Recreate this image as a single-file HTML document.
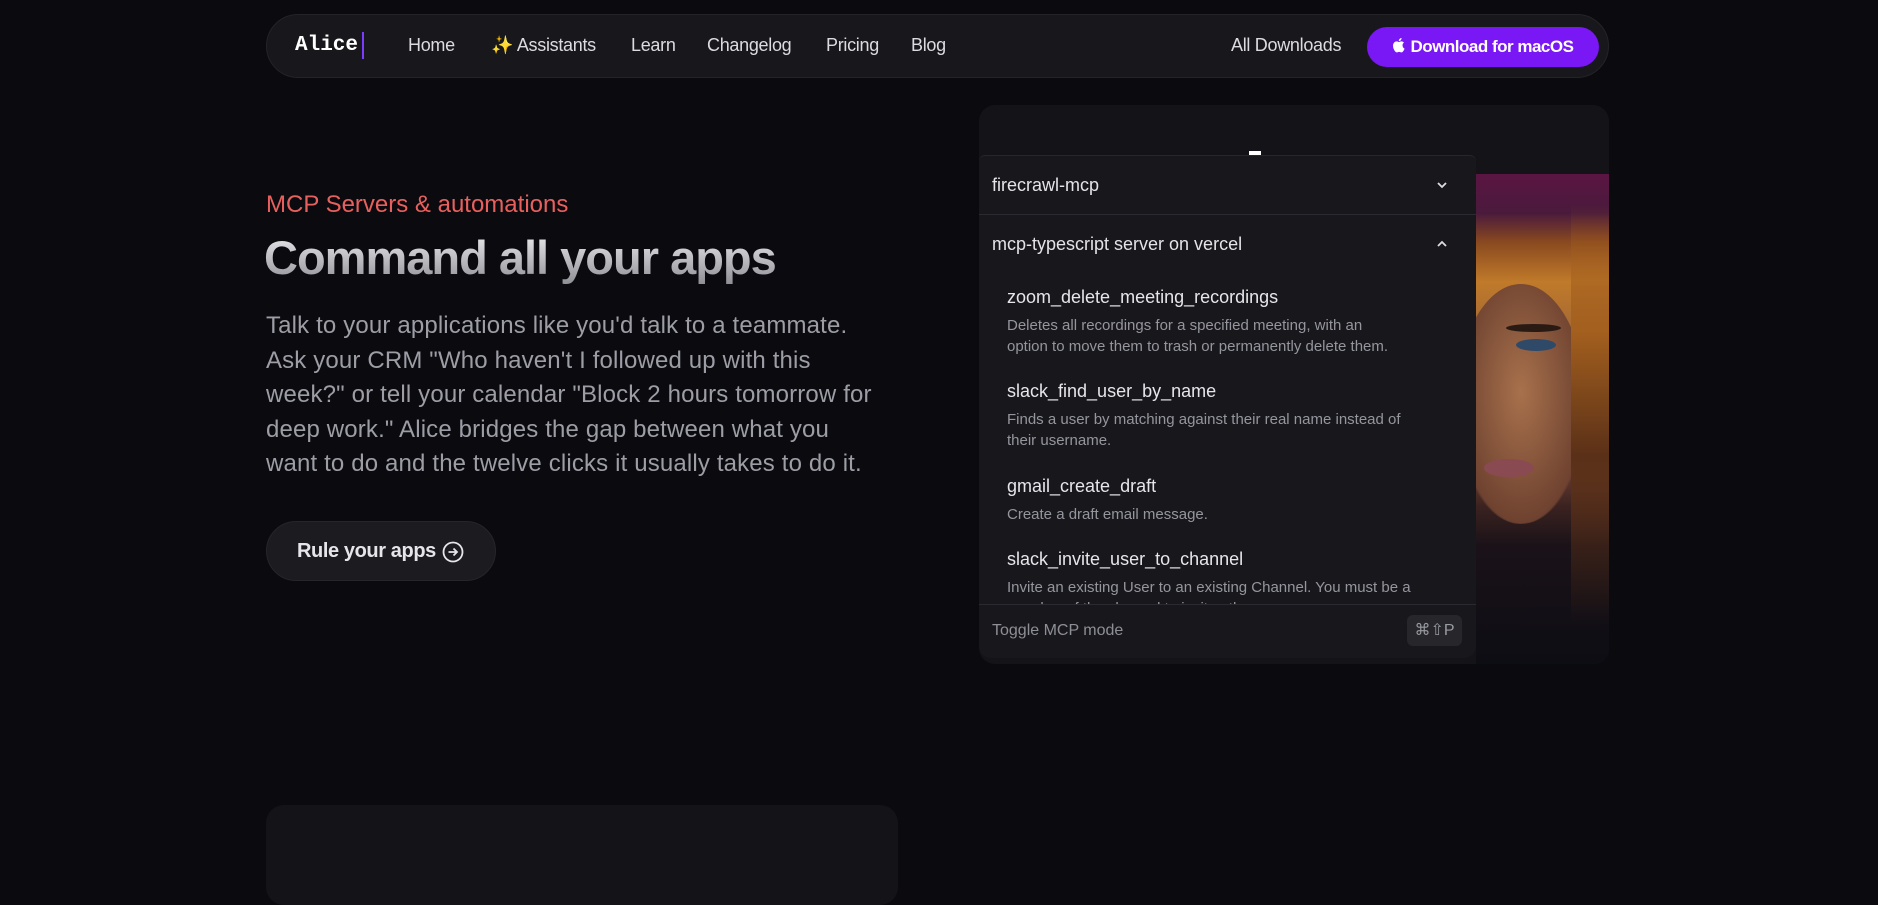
<!DOCTYPE html>
<html><head><meta charset="utf-8"><style>
*{margin:0;padding:0;box-sizing:border-box}
html,body{width:1878px;height:888px;overflow:hidden;background:#0a0a0f;font-family:"Liberation Sans",sans-serif;color:#e6e6ea}
.abs{position:absolute}
.nav{left:266px;top:14px;width:1343px;height:64px;border-radius:32px;background:#18181c;border:1px solid #232328}
.nav a{position:absolute;top:20px;font-size:18px;color:#dcdce0;letter-spacing:-.3px}
.logo{position:absolute;left:28px;top:19px;font-family:"Liberation Mono",monospace;font-weight:bold;font-size:21px;color:#fff}
.logo:after{content:"";position:absolute;right:-6px;top:-2px;width:2px;height:27px;background:#7b3cff}
.dl{position:absolute;left:1100px;top:12px;width:232px;height:40px;border-radius:20px;background:#7a17f5;color:#fff;font-size:17px;font-weight:bold;text-align:center;line-height:40px;letter-spacing:-.5px}
.p{left:266px;top:309px;font-size:24px;line-height:34.6px;color:#9d9da6;letter-spacing:.15px;white-space:nowrap}
.card{left:979px;top:105px;width:630px;height:559px;border-radius:16px;background:#131318}
.dd{left:979px;top:155px;width:497px;height:503px;background:#18181c;border-radius:6px 6px 12px 12px;overflow:hidden;border-top:1px solid #26262b}
.row{position:absolute;left:13px;font-size:18px;color:#e4e4e8}
.t{position:absolute;left:28px;font-size:18px;color:#e6e6ea}
.d{position:absolute;left:28px;font-size:15px;color:#95959e;line-height:21px;white-space:nowrap}
.chev{position:absolute;left:456px;width:14px;height:14px}
</style></head><body>
<div class="abs nav">
 <div class="logo">Alice</div>
 <a style="left:141px">Home</a>
 <a style="left:224px"><span style="color:#f5a623">✨</span> Assistants</a>
 <a style="left:364px">Learn</a>
 <a style="left:440px">Changelog</a>
 <a style="left:559px">Pricing</a>
 <a style="left:644px">Blog</a>
 <a style="left:964px">All Downloads</a>
 <div class="dl"><svg width="13" height="15" viewBox="0 0 13 15" style="vertical-align:-1px;margin-right:5px"><path fill="#fff" d="M10.6 8c0-1.9 1.6-2.8 1.6-2.8-.9-1.3-2.3-1.5-2.8-1.5-1.2-.1-2.300.7-2.900.7s-1.5-.7-2.500-.7C2.700 3.700 1.4 4.500.7 5.800-.7 8.300.300 12 1.700 14c.7 1 1.500 2 2.500 2 1 0 1.400-.6 2.600-.6s1.500.6 2.600.6 1.700-1 2.400-2c.7-1.100 1-2.200 1-2.300 0 0-2.200-.8-2.200-3.700zM8.700 2.300C9.200 1.700 9.600.900 9.500 0 8.700 0 7.800.5 7.300 1.100c-.5.5-.9 1.400-.8 2.200.9.100 1.700-.4 2.200-1z" transform="scale(.9)"/></svg>Download for macOS</div>
</div>
<div class="abs" style="left:266px;top:191px;font-size:24px;color:#e8605e">MCP Servers &amp; automations</div>
<div class="abs" style="left:264px;top:230px;font-size:47px;font-weight:bold;letter-spacing:-1px;background:linear-gradient(#f0f0f2,#8d8d94);-webkit-background-clip:text;color:transparent">Command all your apps</div>
<div class="abs p">Talk to your applications like you'd talk to a teammate.<br>Ask your CRM "Who haven't I followed up with this<br>week?" or tell your calendar "Block 2 hours tomorrow for<br>deep work." Alice bridges the gap between what you<br>want to do and the twelve clicks it usually takes to do it.</div>
<div class="abs" style="left:266px;top:521px;width:230px;height:60px;border-radius:30px;background:#1b1b20;border:1px solid #25252a;font-size:20px;font-weight:bold;color:#e6e6ea;padding:18px 0 0 30px;letter-spacing:-.4px">Rule your apps
 <svg style="position:absolute;left:175px;top:19px" width="22" height="22" viewBox="0 0 22 22" fill="none" stroke="#e6e6ea" stroke-width="1.8"><circle cx="11" cy="11" r="9.5"/><path d="M6.5 11h8M11.5 7.5 15 11l-3.5 3.5"/></svg></div>
<div class="abs" style="left:266px;top:805px;width:632px;height:100px;border-radius:18px;background:#131318"></div>
<div class="abs card"></div>
<div class="abs" style="left:1249px;top:151px;width:12px;height:4px;background:#fff"></div>
<div class="abs" style="left:1476px;top:174px;width:133px;height:490px;border-radius:0 0 14px 0;overflow:hidden;background:linear-gradient(180deg,#5a1542 0%,#4a1a3c 8%,#8a4a1f 14%,#c07a2a 22%,#8e5a3c 40%,#7a4634 58%,#3a2220 68%,#1a1218 76%,#0d0d14 100%)">
 <div style="position:absolute;left:-20px;top:110px;width:130px;height:240px;border-radius:50%;background:radial-gradient(ellipse at 50% 45%,#a8714c,#6e4230 70%,transparent 72%)"></div>
 <div style="position:absolute;left:30px;top:150px;width:55px;height:8px;border-radius:50%;background:#2a1a14"></div>
 <div style="position:absolute;left:40px;top:165px;width:40px;height:12px;border-radius:50%;background:#2e4a68"></div>
 <div style="position:absolute;left:8px;top:285px;width:50px;height:18px;border-radius:50%;background:#8a4a52"></div>
 <div style="position:absolute;left:95px;top:30px;width:40px;height:420px;background:linear-gradient(180deg,transparent,#a4601e 30%,#5a3018 60%,transparent)"></div>
</div>
<div class="abs dd">
 <div class="row" style="top:19px">firecrawl-mcp</div>
 <svg class="chev" style="top:22px" viewBox="0 0 14 14" fill="none" stroke="#ddd" stroke-width="1.8"><path d="M3 5l4 4 4-4"/></svg>
 <div style="position:absolute;left:0;top:58px;width:497px;height:1px;background:#2a2a30"></div>
 <div class="row" style="top:78px">mcp-typescript server on vercel</div>
 <svg class="chev" style="top:81px" viewBox="0 0 14 14" fill="none" stroke="#ddd" stroke-width="1.8"><path d="M3 9l4-4 4 4"/></svg>
 <div class="t" style="top:131px">zoom_delete_meeting_recordings</div>
 <div class="d" style="top:159px">Deletes all recordings for a specified meeting, with an<br>option to move them to trash or permanently delete them.</div>
 <div class="t" style="top:225px">slack_find_user_by_name</div>
 <div class="d" style="top:253px">Finds a user by matching against their real name instead of<br>their username.</div>
 <div class="t" style="top:320px">gmail_create_draft</div>
 <div class="d" style="top:348px">Create a draft email message.</div>
 <div class="t" style="top:393px">slack_invite_user_to_channel</div>
 <div class="d" style="top:421px">Invite an existing User to an existing Channel. You must be a<br>member of the channel to invite others.</div>
 <div style="position:absolute;left:0;top:448px;width:497px;height:55px;background:#18181c;border-top:1px solid #2a2a30">
  <div style="position:absolute;left:13px;top:17px;font-size:16px;color:#8e8e96">Toggle MCP mode</div>
  <div style="position:absolute;left:428px;top:10px;width:55px;height:31px;border-radius:6px;background:#26262b;color:#9a9aa2;font-size:16px;text-align:center;line-height:31px">⌘⇧P</div>
 </div>
</div>
</body></html>
